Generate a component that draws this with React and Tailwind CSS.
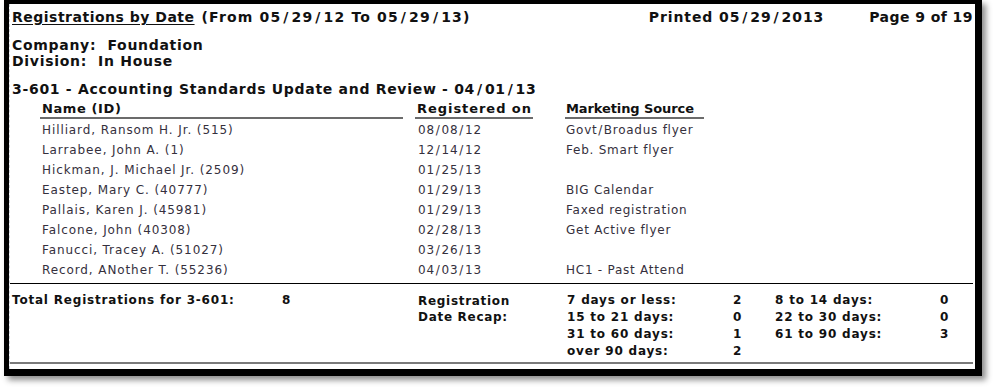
import React from "react";

const rows = [
  ["Hilliard, Ransom H. Jr. (515)", "08/08/12", "Govt/Broadus flyer"],
  ["Larrabee, John A. (1)", "12/14/12", "Feb. Smart flyer"],
  ["Hickman, J. Michael Jr. (2509)", "01/25/13", ""],
  ["Eastep, Mary C. (40777)", "01/29/13", "BIG Calendar"],
  ["Pallais, Karen J. (45981)", "01/29/13", "Faxed registration"],
  ["Falcone, John (40308)", "02/28/13", "Get Active flyer"],
  ["Fanucci, Tracey A. (51027)", "03/26/13", ""],
  ["Record, ANother T. (55236)", "04/03/13", "HC1 - Past Attend"],
];

const recap = [
  ["7 days or less:", "2", "8 to 14 days:", "0"],
  ["15 to 21 days:", "0", "22 to 30 days:", "0"],
  ["31 to 60 days:", "1", "61 to 90 days:", "3"],
  ["over 90 days:", "2", "", ""],
];

function Sl({ t, cls }) {
  const parts = t.split("/");
  return (
    <>
      {parts.map((p, i) => (
        <React.Fragment key={i}>
          {i > 0 && <span className={cls}>/</span>}
          {p}
        </React.Fragment>
      ))}
    </>
  );
}

const BSL = "px-[2px]";
const RSL = "px-[0.75px]";

export default function App() {
  return (
    <div className="w-[994px] h-[389px] bg-white font-['DejaVu_Sans',sans-serif] text-[#111]">
      <div className="ml-[4px] w-[978px] h-[376px] border-l-[5px] border-r-[7px] border-t-[4px] border-b-[7px] border-black shadow-[4px_4px_6px_rgba(0,0,0,0.45)] flex flex-col">
        <div className="flex-1 border-l border-dashed border-gray-300 flex flex-col">
          {/* Title row */}
          <div className="h-[26px] flex items-center pl-[2px] text-[14px] font-bold leading-none whitespace-nowrap">
            <span className="underline underline-offset-2 tracking-[0.5px]">Registrations by Date</span>
            <span className="ml-[7px] tracking-[1.15px]">
              <Sl t="(From 05/29/12 To 05/29/13)" cls={BSL} />
            </span>
            <span className="ml-auto tracking-[0.9px]">
              <Sl t="Printed 05/29/2013" cls={BSL} />
            </span>
            <span className="ml-[45px] mr-[2px] tracking-[0.45px]">Page 9 of 19</span>
          </div>
          {/* Company */}
          <div className="mt-[7px] pl-[2px] text-[14px] font-bold leading-[16px] tracking-[0.7px] whitespace-nowrap">
            <div>Company:&nbsp; Foundation</div>
            <div>Division:&nbsp; In House</div>
          </div>
          {/* Course title */}
          <div className="mt-[11px] h-[18px] pl-[2px] flex items-center text-[14px] font-bold leading-none tracking-[0.7px] whitespace-nowrap">
            <Sl t="3-601 - Accounting Standards Update and Review - 04/01/13" cls={BSL} />
          </div>
          {/* Header */}
          <div className="mt-[3px] flex text-[13px] font-bold leading-none whitespace-nowrap">
            <div className="ml-[30px] w-[363px] h-[18px] border-b-2 border-[#6b6b6b] pl-[2px] pt-[1px] tracking-[0.6px]">Name (ID)</div>
            <div className="ml-[12px] w-[118px] h-[18px] border-b-2 border-[#6b6b6b] pl-[2px] pt-[1px] tracking-[0.95px]">Registered on</div>
            <div className="ml-[32px] w-[139px] h-[18px] border-b-2 border-[#6b6b6b] pl-[1px] pt-[1px] tracking-[-0.1px]">Marketing Source</div>
          </div>
          {/* Rows */}
          <div className="mt-[1px] flex flex-col text-[12px] text-[#35303d] tracking-[0.9px] whitespace-nowrap">
            {rows.map((r, i) => (
              <div key={i} className="h-[20px] flex items-center">
                <div className="ml-[32px] w-[376px]">{r[0]}</div>
                <div className="w-[148px]">
                  <Sl t={r[1]} cls={RSL} />
                </div>
                <div className="tracking-[0.75px]">
                  <Sl t={r[2]} cls={RSL} />
                </div>
              </div>
            ))}
          </div>
          <div className="mt-[3px] h-px bg-black mr-[2px]" />
          {/* Footer */}
          <div className="mt-[8px] flex text-[12px] font-bold leading-[17px] tracking-[0.8px] whitespace-nowrap">
            <div className="ml-[2px] w-[270px]">Total Registrations for 3-601:</div>
            <div className="w-[136px]">8</div>
            <div className="w-[149px] leading-[16px] pt-[1px] tracking-[0.7px]">
              <div>Registration</div>
              <div>Date Recap:</div>
            </div>
            <div className="flex flex-col">
              {recap.map((r, i) => (
                <div key={i} className="flex h-[17px] items-center">
                  <div className="w-[166px]">{r[0]}</div>
                  <div className="w-[42px]">{r[1]}</div>
                  <div className="w-[165px]">{r[2]}</div>
                  <div>{r[3]}</div>
                </div>
              ))}
            </div>
          </div>
          <div className="mt-[2px] h-[2px] bg-[#7a7a7a] mr-[2px]" />
        </div>
      </div>
    </div>
  );
}
